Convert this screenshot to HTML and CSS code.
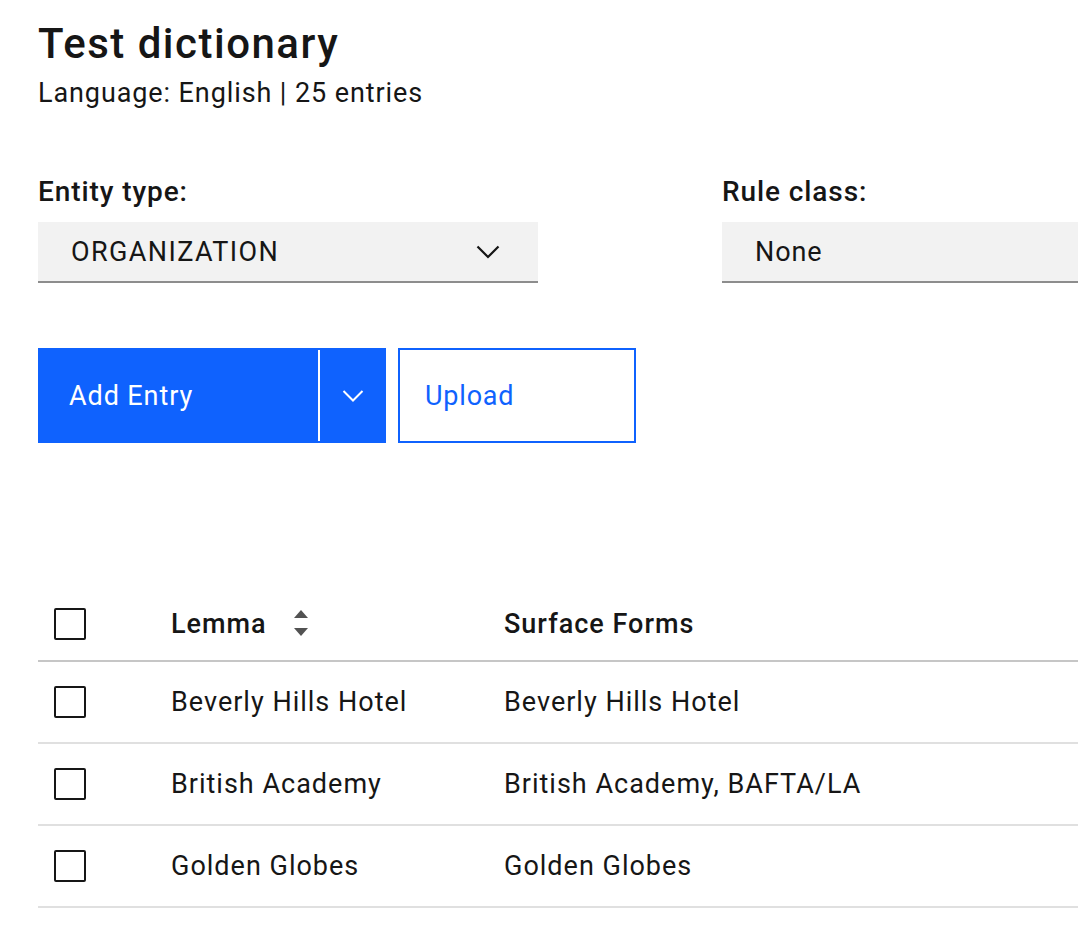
FILE: index.html
```html
<!DOCTYPE html>
<html lang="en">
<head>
<meta charset="utf-8">
<title>Test dictionary</title>
<link rel="stylesheet" href="styles.css">
</head>
<body>
<main class="page">
  <header class="page-header">
    <h1 class="title">Test dictionary</h1>
    <p class="subtitle">Language: English | 25 entries</p>
  </header>

  <section class="filters">
    <div class="field field-entity">
      <label class="field-label">Entity type:</label>
      <div class="select">
        <span class="select-value">ORGANIZATION</span>
        <svg class="select-chevron" width="24" height="14" viewBox="0 0 24 14" aria-hidden="true">
          <path d="M1.5 1.5 L12 12 L22.5 1.5" fill="none" stroke="#161616" stroke-width="2.2"/>
        </svg>
      </div>
    </div>
    <div class="field field-rule">
      <label class="field-label">Rule class:</label>
      <div class="select">
        <span class="select-value">None</span>
      </div>
    </div>
  </section>

  <section class="actions">
    <div class="split-button">
      <button class="btn-primary">Add Entry</button>
      <span class="split-divider"></span>
      <button class="btn-primary btn-caret" aria-label="More">
        <svg width="22" height="12" viewBox="0 0 22 12" aria-hidden="true">
          <path d="M1.5 1 L11 10.5 L20.5 1" fill="none" stroke="#ffffff" stroke-width="2"/>
        </svg>
      </button>
    </div>
    <button class="btn-tertiary">Upload</button>
  </section>

  <section class="table">
    <div class="row row-head">
      <div class="cell cell-check"><span class="checkbox"></span></div>
      <div class="cell cell-lemma">
        <span>Lemma</span>
        <svg class="sort-icon" width="16" height="28" viewBox="0 0 16 28" aria-hidden="true">
          <polygon points="8,0 15,8 1,8" fill="#525252"/>
          <polygon points="1,18 15,18 8,26" fill="#525252"/>
        </svg>
      </div>
      <div class="cell cell-forms">Surface Forms</div>
    </div>
    <div class="row">
      <div class="cell cell-check"><span class="checkbox"></span></div>
      <div class="cell cell-lemma">Beverly Hills Hotel</div>
      <div class="cell cell-forms">Beverly Hills Hotel</div>
    </div>
    <div class="row">
      <div class="cell cell-check"><span class="checkbox"></span></div>
      <div class="cell cell-lemma">British Academy</div>
      <div class="cell cell-forms">British Academy, BAFTA/LA</div>
    </div>
    <div class="row">
      <div class="cell cell-check"><span class="checkbox"></span></div>
      <div class="cell cell-lemma">Golden Globes</div>
      <div class="cell cell-forms">Golden Globes</div>
    </div>
  </section>
</main>
</body>
</html>
```

FILE: styles.css
```css
html, body {
  margin: 0;
  padding: 0;
  background: #ffffff;
  overflow: hidden;
}

body {
  font-family: Roboto, "Noto Sans", "Liberation Sans", sans-serif;
  color: #161616;
}

.page {
  padding: 18px 0 0 38px;
  width: 100%;
  box-sizing: border-box;
}

.title {
  margin: 0;
  font-size: 42px;
  font-weight: 500;
  line-height: 52px;
  letter-spacing: 1.5px;
}

.subtitle {
  margin: 3px 0 0;
  font-size: 27px;
  line-height: 40px;
  font-weight: 400;
  letter-spacing: 0.9px;
}

.filters {
  display: grid;
  grid-template-columns: 500px 1fr;
  column-gap: 184px;
  margin-top: 62px;
}

.field {
  display: flex;
  flex-direction: column;
}

.field-label {
  font-size: 28px;
  font-weight: 500;
  line-height: 34px;
  letter-spacing: 0.9px;
  margin-bottom: 13px;
}

.select {
  height: 61px;
  box-sizing: border-box;
  background: #f2f2f2;
  border-bottom: 2px solid #8d8d8d;
  display: flex;
  align-items: center;
  justify-content: space-between;
  padding: 0 38px 0 33px;
}

.select-value {
  font-size: 27px;
  letter-spacing: 1.4px;
}

.field-rule .select-value {
  letter-spacing: 0.9px;
}

.actions {
  display: flex;
  gap: 12px;
  margin-top: 65px;
}

.split-button {
  display: flex;
  background: #0f62fe;
  height: 95px;
}

.btn-primary {
  border: 0;
  background: #0f62fe;
  color: #ffffff;
  font-family: inherit;
  font-size: 27px;
  letter-spacing: 0.9px;
  text-align: left;
  padding: 0 0 0 31px;
  width: 280px;
  height: 95px;
}

.split-divider {
  width: 2px;
  background: #ffffff;
  margin: 2px 0;
}

.btn-caret {
  width: 66px;
  padding: 0;
  text-align: center;
  display: flex;
  align-items: center;
  justify-content: center;
}

.btn-tertiary {
  width: 238px;
  height: 95px;
  border: 2px solid #0f62fe;
  background: #ffffff;
  color: #0f62fe;
  font-family: inherit;
  font-size: 27px;
  letter-spacing: 0.8px;
  text-align: left;
  padding: 0 0 0 25px;
}

.table {
  margin-top: 145px;
}

.row {
  display: grid;
  grid-template-columns: 117px 333px 1fr;
  height: 82px;
  border-bottom: 2px solid #e0e0e0;
  box-sizing: border-box;
  align-items: center;
  font-size: 27px;
  letter-spacing: 1px;
}

.row-head {
  height: 74px;
  border-bottom: 2px solid #c6c6c6;
  font-weight: 500;
}

.cell {
  padding-left: 16px;
  display: flex;
  align-items: center;
}

.checkbox {
  display: block;
  width: 32px;
  height: 32px;
  box-sizing: border-box;
  border: 2.5px solid #161616;
  border-radius: 2px;
}

.sort-icon {
  margin-left: 26px;
}
```
